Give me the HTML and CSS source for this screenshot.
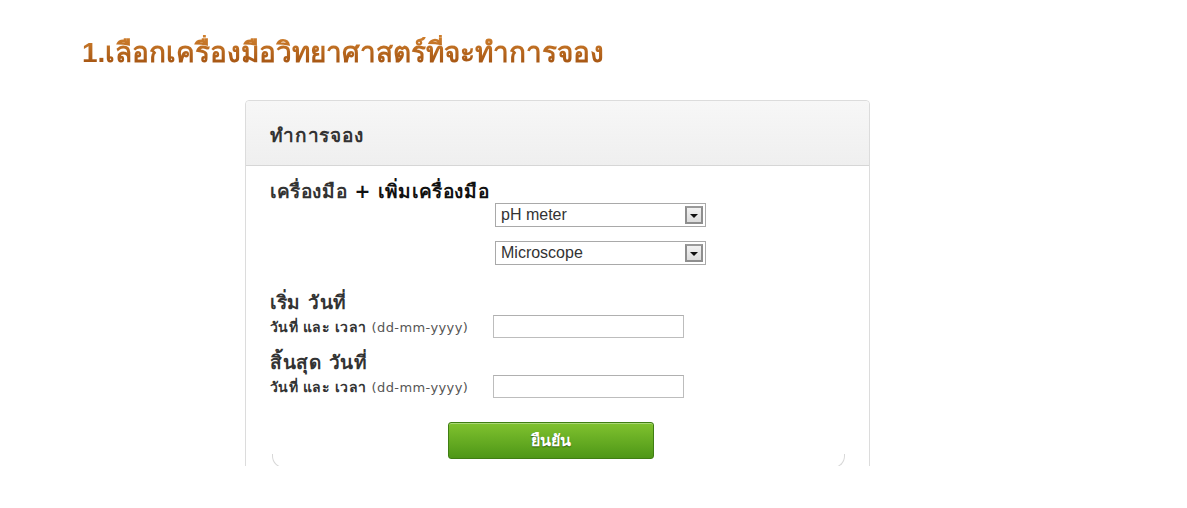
FILE: index.html
```html
<!DOCTYPE html>
<html lang="th">
<head>
<meta charset="utf-8">
<title>ทำการจอง</title>
<link rel="stylesheet" href="styles.css">
</head>
<body>
<div class="page">
  <h1 class="step-title">1.เลือกเครื่องมือวิทยาศาสตร์ที่จะทำการจอง</h1>
  <div class="panel-clip">
    <div class="panel">
      <div class="panel-head">ทำการจอง</div>
      <div class="panel-body">
        <div class="form-box">
          <h3 class="field-title">เครื่องมือ <span class="add">+ เพิ่มเครื่องมือ</span></h3>
          <div class="select-list">
            <div class="select"><span class="select-value">pH meter</span><span class="select-btn"><span class="tri"></span></span></div>
            <div class="select"><span class="select-value">Microscope</span><span class="select-btn"><span class="tri"></span></span></div>
          </div>

          <h3 class="field-title date-title">เริ่ม วันที่</h3>
          <div class="date-row">
            <label class="date-label">วันที่ และ เวลา <span class="fmt">(dd-mm-yyyy)</span></label>
            <input class="date-input" type="text">
          </div>

          <h3 class="field-title date-title2">สิ้นสุด วันที่</h3>
          <div class="date-row">
            <label class="date-label">วันที่ และ เวลา <span class="fmt">(dd-mm-yyyy)</span></label>
            <input class="date-input" type="text">
          </div>

          <button class="btn-confirm" type="button">ยืนยัน</button>
          <div class="form-foot"></div>
        </div>
      </div>
    </div>
  </div>
</div>
</body>
</html>
```

FILE: styles.css
```css
html, body {
  margin: 0;
  padding: 0;
  background: #ffffff;
}

body {
  font-family: Tahoma, "DejaVu Sans", "Liberation Sans", sans-serif;
  color: #333333;
  width: 1187px;
  height: 508px;
  overflow: hidden;
}

.page {
  padding-top: 35px;
}

.step-title {
  margin: 0 0 29px 82px;
  font-family: "Liberation Sans", Arial, sans-serif;
  font-size: 28px;
  line-height: 36px;
  font-weight: bold;
  color: #a95814;
  background: linear-gradient(#d0802e, #9a4a0c);
  -webkit-background-clip: text;
  background-clip: text;
  -webkit-text-fill-color: transparent;
  width: max-content;
}

.panel-clip {
  margin-left: 245px;
  width: 625px;
  height: 366px;
  overflow: hidden;
}

.panel {
  border: 1px solid #dcdcdc;
  border-radius: 4px;
  background: #ffffff;
  height: 420px;
  box-sizing: border-box;
}

.panel-head {
  height: 64px;
  padding-left: 24px;
  line-height: 69px;
  font-size: 19px;
  letter-spacing: 0.8px;
  font-weight: bold;
  color: #333333;
  background: linear-gradient(#f7f7f7, #efefef);
  border-bottom: 1px solid #d6d6d6;
  border-radius: 4px 4px 0 0;
}

.panel-body {
  padding: 0 23px 0 25px;
}

.form-box {
  padding-top: 1px;
}

.field-title {
  margin: 12px 0 0 -1px;
  font-size: 19px;
  letter-spacing: 0.6px;
  line-height: 24px;
  font-weight: bold;
  color: #333333;
}

.field-title .add {
  color: #111111;
}

.select-list {
  margin-left: 224px;
  display: flex;
  flex-direction: column;
  gap: 14px;
}

.select {
  display: flex;
  align-items: center;
  width: 211px;
  height: 24px;
  box-sizing: border-box;
  border: 1px solid #a9a9a9;
  background: #ffffff;
}

.select-value {
  flex: 1;
  padding-left: 5px;
  font-family: "Liberation Sans", Arial, sans-serif;
  font-size: 16px;
  color: #333333;
}

.select-btn {
  width: 18px;
  height: 18px;
  margin-right: 2px;
  box-sizing: border-box;
  border: 2px solid #8e8e8e;
  border-top-color: #9a9a9a;
  background: linear-gradient(#f2f2f2, #dcdcdc);
  display: flex;
  align-items: center;
  justify-content: center;
}

.tri {
  width: 0;
  height: 0;
  border-left: 4px solid transparent;
  border-right: 4px solid transparent;
  border-top: 4px solid #111111;
  margin-top: 1px;
}

.date-title {
  margin-top: 25px;
}

.date-title2 {
  margin-top: 12px;
}

.date-row {
  display: flex;
  align-items: center;
  margin: 1px 0 0 -1px;
}

.date-label {
  width: 223px;
  font-size: 14px;
  letter-spacing: 0.3px;
  font-weight: bold;
  color: #333333;
}

.date-label .fmt {
  font-weight: normal;
  color: #555555;
  font-family: "DejaVu Sans", Tahoma, sans-serif;
  font-size: 13px;
  letter-spacing: 0.4px;
}

.date-input {
  width: 191px;
  height: 23px;
  box-sizing: border-box;
  margin: 0;
  border: 1px solid #bdbdbd;
  border-top-color: #b0b0b0;
  background: #ffffff;
  padding: 0 4px;
}

.btn-confirm {
  display: block;
  margin: 24px 0 0 177px;
  width: 206px;
  height: 37px;
  border: 1px solid #3f7e13;
  border-radius: 3px;
  background: linear-gradient(#80c22f, #4e9717);
  box-shadow: inset 0 1px 0 rgba(255, 255, 255, 0.35);
  color: #ffffff;
  font-family: Tahoma, "DejaVu Sans", sans-serif;
  font-size: 16px;
  font-weight: bold;
  text-shadow: 0 1px 1px #2d5a0c;
  cursor: pointer;
}

.form-foot {
  margin: -5px 0 0 1px;
  width: 573px;
  height: 14px;
  box-sizing: border-box;
  border: 1px solid #d8d8d8;
  border-top: 0;
  border-radius: 0 0 12px 12px;
}
```
